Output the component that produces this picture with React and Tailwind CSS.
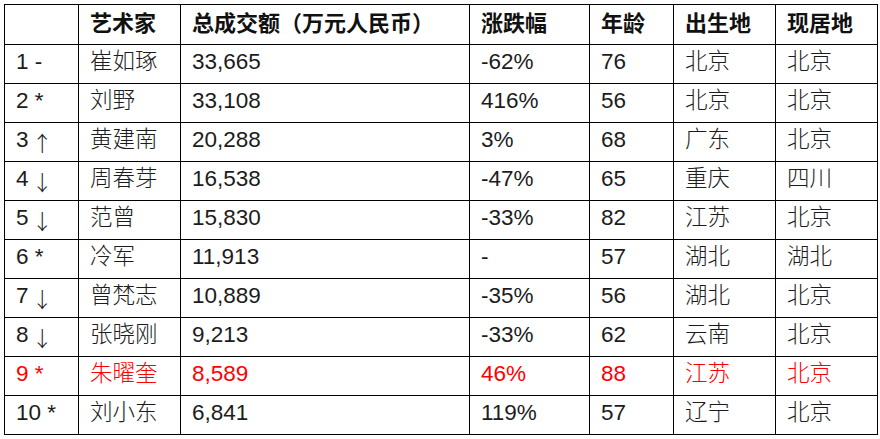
const cols = ['w-[74px]', 'w-[102px]', 'w-[289px]', 'w-[120px]', 'w-[84px]', 'w-[102px]', 'w-[102px]']

const head = ['', '艺术家', '总成交额（万元人民币）', '涨跌幅', '年龄', '出生地', '现居地']

const rows = [
  ['1 -', '崔如琢', '33,665', '-62%', '76', '北京', '北京'],
  ['2 *', '刘野', '33,108', '416%', '56', '北京', '北京'],
  ['3 ↑', '黄建南', '20,288', '3%', '68', '广东', '北京'],
  ['4 ↓', '周春芽', '16,538', '-47%', '65', '重庆', '四川'],
  ['5 ↓', '范曾', '15,830', '-33%', '82', '江苏', '北京'],
  ['6 *', '冷军', '11,913', '-', '57', '湖北', '湖北'],
  ['7 ↓', '曾梵志', '10,889', '-35%', '56', '湖北', '北京'],
  ['8 ↓', '张晓刚', '9,213', '-33%', '62', '云南', '北京'],
  ['9 *', '朱曜奎', '8,589', '46%', '88', '江苏', '北京', true],
  ['10 *', '刘小东', '6,841', '119%', '57', '辽宁', '北京']
]

const font = "font-['Liberation_Sans','Noto_Sans_CJK_SC',sans-serif]"

// rank column: arrows come from the CJK face, they are taller and thinner there
function Rank({ t }) {
  const m = t.match(/^(\d+) ([↑↓])$/)
  if (!m) return t
  return (
    <>
      {m[1]}&nbsp;
      <span className="relative top-[2px] -ml-[3px] font-['Noto_Sans_CJK_SC',sans-serif] text-[21px] font-light">{m[2]}</span>
    </>
  )
}

function Cell({ i, children, h, red }) {
  return (
    <div
      className={[
        'flex shrink-0 items-center border-r border-b border-black pl-[11px] text-[22.5px] leading-none',
        cols[i],
        h ? 'h-[40px] pb-[1px] text-[22px] font-semibold text-[#111]' : 'h-[39px] pb-[3px]',
        red ? 'text-[#ff0000]' : h ? '' : 'text-[#1c1c1c]'
      ].join(' ')}
    >
      {children}
    </div>
  )
}

export default function App() {
  return (
    <div className={`min-h-[439px] w-[880px] bg-white pl-[4px] pt-[4px] ${font}`}>
      <div className="inline-flex flex-col border-l border-t border-black">
        <div className="flex">
          {head.map((t, i) => (
            <Cell key={i} i={i} h>
              {t}
            </Cell>
          ))}
        </div>
        {rows.map((r, ri) => (
          <div key={ri} className="flex">
            {r.slice(0, 7).map((t, i) => (
              <Cell key={i} i={i} red={r[7]}>
                {i === 0 ? <Rank t={t} /> : i === 1 || i > 4 ? <span className="font-light">{t}</span> : t}
              </Cell>
            ))}
          </div>
        ))}
      </div>
    </div>
  )
}
